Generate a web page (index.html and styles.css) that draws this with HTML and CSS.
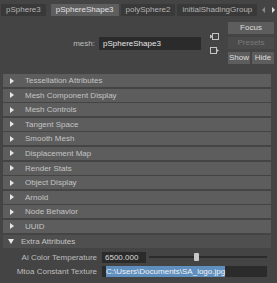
FILE: index.html
```html
<!DOCTYPE html>
<html lang="en">
<head>
    <meta charset="utf-8">
    <title>Attribute Editor</title>
    <link rel="stylesheet" href="styles.css">
</head>
<body>
    <div class="tabs">
        <span class="tab tab-first">pSphere3</span>
        <span class="tab active">pSphereShape3</span>
        <span class="tab">polySphere2</span>
        <span class="tab">initialShadingGroup</span>
        <span class="tab-arrow left"></span>
        <span class="tab-arrow right"></span>
    </div>

    <div class="header">
        <label class="mesh-label">mesh:</label>
        <div class="field mesh-field">pSphereShape3</div>
        <div class="icons">
            <svg width="11" height="9" viewBox="0 0 11 9">
                <rect x="3.5" y="1.5" width="6" height="6" fill="none" stroke="#c4c4c4"/>
                <path d="M1 2.5 L4 4.5 L1 6.5 Z" fill="#c4c4c4"/>
            </svg>
            <svg width="11" height="9" viewBox="0 0 11 9">
                <rect x="1.5" y="1.5" width="6" height="6" fill="none" stroke="#c4c4c4"/>
                <path d="M7 2.5 L10 4.5 L7 6.5 Z" fill="#c4c4c4"/>
            </svg>
        </div>
        <div class="buttons">
            <div class="btn">Focus</div>
            <div class="btn disabled">Presets</div>
            <div class="btn-pair">
                <div class="btn">Show</div>
                <div class="btn">Hide</div>
            </div>
        </div>
    </div>

    <div class="sections">
        <div class="section"><span class="arrow"></span>Tessellation Attributes</div>
        <div class="section"><span class="arrow"></span>Mesh Component Display</div>
        <div class="section"><span class="arrow"></span>Mesh Controls</div>
        <div class="section"><span class="arrow"></span>Tangent Space</div>
        <div class="section"><span class="arrow"></span>Smooth Mesh</div>
        <div class="section"><span class="arrow"></span>Displacement Map</div>
        <div class="section"><span class="arrow"></span>Render Stats</div>
        <div class="section"><span class="arrow"></span>Object Display</div>
        <div class="section"><span class="arrow"></span>Arnold</div>
        <div class="section"><span class="arrow"></span>Node Behavior</div>
        <div class="section"><span class="arrow"></span>UUID</div>
        <div class="section open"><span class="arrow down"></span>Extra Attributes</div>
    </div>

    <div class="attrs">
        <div class="attr-row">
            <label class="attr-label">Ai Color Temperature</label>
            <div class="field num-field">6500.000</div>
            <div class="slider"><span class="thumb"></span></div>
        </div>
        <div class="attr-row">
            <label class="attr-label">Mtoa Constant Texture</label>
            <div class="field text-field"><span class="selected">C:\Users\Documents\SA_logo.jpg</span></div>
        </div>
    </div>
</body>
</html>
```

FILE: styles.css
```css
html, body {
    margin: 0;
    padding: 0;
    width: 100%;
    height: 100%;
    overflow: hidden;
}
body {
    background: #444444;
    color: #c4c4c4;
    font-family: "Liberation Sans", Arial, sans-serif;
    font-size: 8px;
}

/* tab strip */
.tabs {
    display: flex;
    align-items: center;
    height: 16px;
    padding: 3px 0 0 1px;
    box-sizing: border-box;
    gap: 2px;
}
.tab {
    height: 12px;
    line-height: 12px;
    padding: 0 5px;
    background: #393939;
    color: #b4b4b4;
    white-space: nowrap;
}
.tab-first {
    margin-right: 3px;
}
.tab.active {
    background: #5e5e5e;
    color: #e2e2e2;
}
.tab-arrow {
    width: 0;
    height: 0;
    border-top: 3px solid transparent;
    border-bottom: 3px solid transparent;
}
.tab-arrow.left {
    margin-left: 3px;
    border-right: 3px solid #8a8a8a;
}
.tab-arrow.right {
    margin-left: 5px;
    border-left: 3px solid #dcdcdc;
}

/* mesh row + buttons */
.header {
    display: flex;
    align-items: center;
    height: 42px;
    margin-top: 6px;
}
.mesh-label {
    width: 95px;
    text-align: right;
    margin-right: 4px;
    color: #bdbdbd;
}
.field {
    background: #2b2b2b;
    color: #dcdcdc;
    box-sizing: border-box;
    white-space: nowrap;
    overflow: hidden;
}
.mesh-field {
    width: 102px;
    height: 13px;
    line-height: 13px;
    padding-left: 4px;
    color: #e6e6e6;
}
.icons {
    display: flex;
    flex-direction: column;
    gap: 5px;
    margin-left: 8px;
    width: 11px;
}
.icons svg {
    display: block;
}
.buttons {
    display: flex;
    flex-direction: column;
    gap: 3px;
    margin-left: 8px;
    width: 46px;
}
.btn-pair {
    display: flex;
    gap: 2px;
}
.btn-pair .btn {
    flex: 1;
}
.btn {
    height: 12px;
    line-height: 12px;
    text-align: center;
    background: #5d5d5d;
    color: #dedede;
}
.btn.disabled {
    background: #4b4b4b;
    color: #7a7a7a;
}

/* collapsed frames */
.sections {
    display: flex;
    flex-direction: column;
    gap: 1.6px;
    margin-top: 10px;
    padding: 0 6px 0 3px;
}
.section {
    display: flex;
    align-items: center;
    height: 13px;
    padding-left: 7px;
    background: #5d5d5d;
    color: #c4c4c4;
}
.section.open {
    padding-left: 5px;
    background: #4f4f4f;
}
.arrow {
    width: 0;
    height: 0;
    margin-right: 11px;
    border-left: 4px solid #e6e6e6;
    border-top: 3.5px solid transparent;
    border-bottom: 3.5px solid transparent;
}
.arrow.down {
    margin-right: 7px;
    border-left: 3.5px solid transparent;
    border-right: 3.5px solid transparent;
    border-top: 5px solid #e6e6e6;
    border-bottom: 0;
}

/* extra attributes */
.attrs {
    display: flex;
    flex-direction: column;
    gap: 3px;
    padding-top: 4px;
}
.attr-row {
    display: flex;
    align-items: center;
    height: 11px;
}
.attr-label {
    width: 97px;
    text-align: right;
    margin-right: 5px;
    color: #bdbdbd;
}
.num-field {
    width: 44px;
    height: 11px;
    line-height: 11px;
    padding-left: 3px;
}
.slider {
    position: relative;
    width: 118px;
    height: 2px;
    margin-left: 3px;
    background: #2b2b2b;
}
.thumb {
    position: absolute;
    left: 45px;
    top: -3px;
    width: 5px;
    height: 8px;
    border-radius: 1px;
    background: #c8c8c8;
}
.text-field {
    width: 165px;
    height: 11px;
    line-height: 11px;
    padding-left: 4px;
}
.selected {
    background: #5f8fbf;
    color: #f2f2f2;
    padding: 1px 0;
}
```
